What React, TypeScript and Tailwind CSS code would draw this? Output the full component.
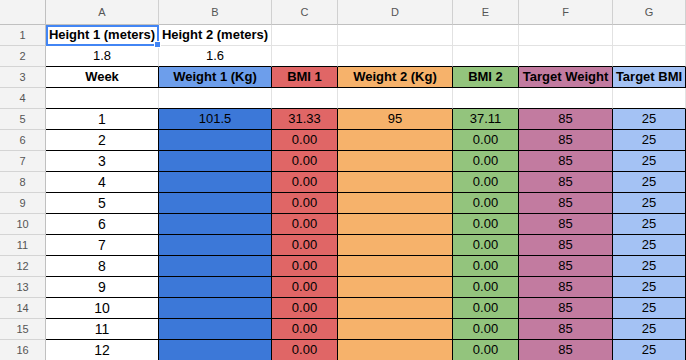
import React from "react";

const GR = "border-r border-r-[#e2e2e2]";
const BR = "border-r border-r-black";
const GB = "border-b border-b-[#e2e2e2]";
const BB = "border-b border-b-black";

type CellProps = {
  children?: React.ReactNode;
  cls?: string;
  r: string;
  b: string;
};

function Cell({ children, cls = "", r, b }: CellProps) {
  return (
    <div
      className={`flex items-center justify-center whitespace-nowrap overflow-visible leading-[20px] text-[13px] text-black ${r} ${b} ${cls}`}
    >
      {children}
    </div>
  );
}

function RowNum({ n }: { n: number }) {
  return (
    <div className="flex items-center justify-center bg-[#f3f3f3] border-r border-r-[#c0c0c0] border-b border-b-[#d4d4d4] text-[11px] text-[#555]">
      {n}
    </div>
  );
}

const letters = ["A", "B", "C", "D", "E", "F", "G"];

export default function App() {
  const weeks = Array.from({ length: 12 }, (_, i) => i + 1);
  return (
    <div className="relative w-[686px] h-[360px] overflow-hidden bg-white font-['Liberation_Sans',Arial,sans-serif]">
      <div className="grid grid-cols-[46px_113px_113px_66px_115px_66px_94px_73px] grid-rows-[25px_repeat(16,21px)]">
        {/* header row */}
        <div className="bg-[#f3f3f3] border-r border-r-[#c0c0c0] border-b border-b-[#c0c0c0]" />
        {letters.map((l) => (
          <div
            key={l}
            className="flex items-center justify-center bg-[#f3f3f3] border-r border-r-[#d0d0d0] border-b border-b-[#c0c0c0] text-[11px] text-[#555]"
          >
            {l}
          </div>
        ))}

        {/* row 1 */}
        <RowNum n={1} />
        <Cell r={GR} b={GB} cls="font-bold">Height 1 (meters)</Cell>
        <Cell r={GR} b={GB} cls="font-bold">Height 2 (meters)</Cell>
        <Cell r={GR} b={GB} />
        <Cell r={GR} b={GB} />
        <Cell r={GR} b={GB} />
        <Cell r={GR} b={GB} />
        <Cell r={GR} b={GB} />

        {/* row 2 */}
        <RowNum n={2} />
        <Cell r={GR} b={BB}>1.8</Cell>
        <Cell r={GR} b={BB}>1.6</Cell>
        <Cell r={GR} b={BB} />
        <Cell r={GR} b={BB} />
        <Cell r={GR} b={BB} />
        <Cell r={GR} b={BB} />
        <Cell r={GR} b={BB} />

        {/* row 3 */}
        <RowNum n={3} />
        <Cell r={BR} b={BB} cls="font-bold">Week</Cell>
        <Cell r={BR} b={BB} cls="font-bold bg-[#6d9eeb]">Weight 1 (Kg)</Cell>
        <Cell r={BR} b={BB} cls="font-bold bg-[#e06666]">BMI 1</Cell>
        <Cell r={BR} b={BB} cls="font-bold bg-[#f6b26b]">Weight 2 (Kg)</Cell>
        <Cell r={BR} b={BB} cls="font-bold bg-[#93c47d]">BMI 2</Cell>
        <Cell r={BR} b={BB} cls="font-bold bg-[#c27ba0]">Target Weight</Cell>
        <Cell r={BR} b={BB} cls="font-bold bg-[#a4c2f4]">Target BMI</Cell>

        {/* row 4 */}
        <RowNum n={4} />
        <Cell r={GR} b={BB} />
        <Cell r={GR} b={BB} />
        <Cell r={GR} b={BB} />
        <Cell r={GR} b={BB} />
        <Cell r={GR} b={BB} />
        <Cell r={GR} b={BB} />
        <Cell r={GR} b={BB} />

        {weeks.map((w) => (
          <React.Fragment key={w}>
            <RowNum n={w + 4} />
            <Cell r={BR} b={BB} cls="text-[14px]">{w}</Cell>
            <Cell r={BR} b={BB} cls="bg-[#3c78d8]">{w === 1 ? "101.5" : ""}</Cell>
            <Cell r={BR} b={BB} cls="bg-[#e06666]">{w === 1 ? "31.33" : "0.00"}</Cell>
            <Cell r={BR} b={BB} cls="bg-[#f6b26b]">{w === 1 ? "95" : ""}</Cell>
            <Cell r={BR} b={BB} cls="bg-[#93c47d]">{w === 1 ? "37.11" : "0.00"}</Cell>
            <Cell r={BR} b={BB} cls="bg-[#c27ba0]">85</Cell>
            <Cell r={BR} b={BB} cls="bg-[#a4c2f4]">25</Cell>
          </React.Fragment>
        ))}
      </div>

      {/* selection on A1 */}
      <div className="absolute left-[46px] top-[25px] w-[113px] h-[21px] border-2 border-[#4285f4] pointer-events-none" />
      <div className="absolute left-[154px] top-[41px] w-[7px] h-[7px] bg-[#4285f4] border border-white" />
    </div>
  );
}
